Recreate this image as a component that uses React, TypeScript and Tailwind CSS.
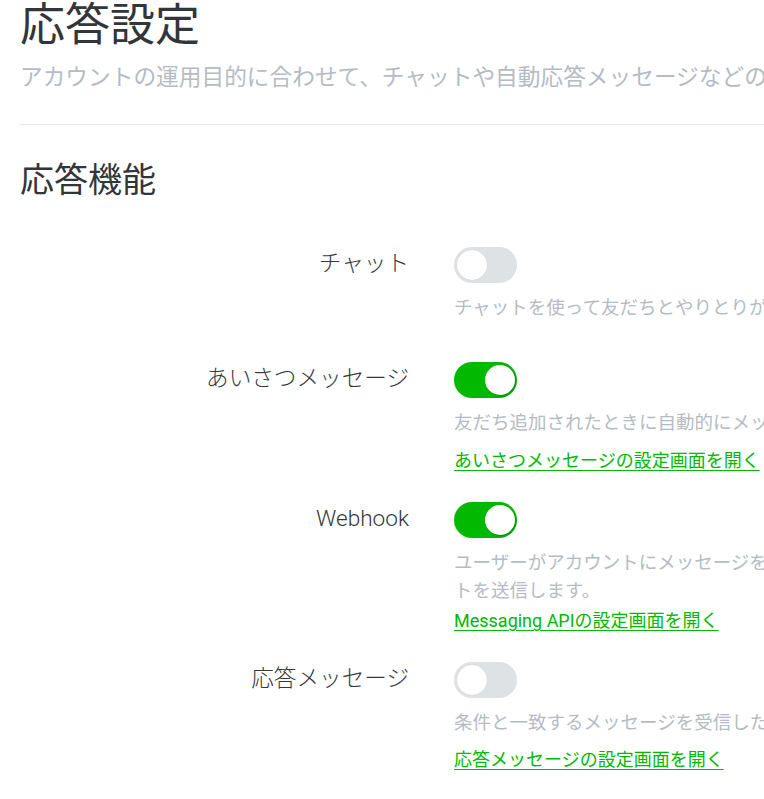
import React from "react";

type Row = {
  label: string;
  on: boolean;
  desc: string[];
  link?: string;
  linkMt?: number;
  mb: number;
};

const rows: Row[] = [
  {
    label: "チャット",
    on: false,
    desc: ["チャットを使って友だちとやりとりができます。"],
    mb: 40,
  },
  {
    label: "あいさつメッセージ",
    on: true,
    desc: ["友だち追加されたときに自動的にメッセージを送信します。"],
    link: "あいさつメッセージの設定画面を開く",
    linkMt: 10,
    mb: 27,
  },
  {
    label: "Webhook",
    on: true,
    desc: [
      "ユーザーがアカウントにメッセージを送信したときなどに、Webhook URLにイベン",
      "トを送信します。",
    ],
    link: "Messaging APIの設定画面を開く",
    linkMt: 2,
    mb: 27,
  },
  {
    label: "応答メッセージ",
    on: false,
    desc: ["条件と一致するメッセージを受信したときに、自動で応答メッセージを送信します。"],
    link: "応答メッセージの設定画面を開く",
    linkMt: 9,
    mb: 27,
  },
];

function Toggle({ on }: { on: boolean }) {
  return (
    <div
      className={
        "relative h-[36px] w-[63px] rounded-full " +
        (on ? "bg-[#00b900]" : "bg-[#dfe2e5]")
      }
    >
      <div
        className={
          "absolute top-[3px] h-[30px] w-[30px] rounded-full bg-white " +
          (on
            ? "right-[2px] shadow-[1px_1px_2px_rgba(0,80,0,0.45)]"
            : "left-[3px] shadow-[0_0_1px_rgba(0,0,0,0.15)]")
        }
      />
    </div>
  );
}

export default function App() {
  return (
    <div
      className="w-full min-h-[799px] overflow-hidden bg-white"
      style={{ fontFamily: 'Roboto, "Noto Sans CJK JP", sans-serif' }}
    >
      <div className="w-[1100px] pl-[20px]">
        <h1 className="text-[45px] leading-[52px] font-normal text-[#333639]">応答設定</h1>
        <p className="mt-[11px] whitespace-nowrap text-[22.7px] leading-[30px] text-[#b6bbc3]">
          アカウントの運用目的に合わせて、チャットや自動応答メッセージなどの機能を設定できます。
        </p>
        <div className="mt-[31px] h-px bg-[#e6e8ea]" />
        <h2 className="mt-[33px] text-[34px] leading-[44px] font-normal text-[#333639]">応答機能</h2>

        <div className="mt-[45px]">
          {rows.map((r) => (
            <div key={r.label} className="flex" style={{ marginBottom: r.mb }}>
              <div className="w-[389px] shrink-0 text-right text-[22.6px] leading-[34px] font-light text-[#34383c]">
                {r.label}
              </div>
              <div className="ml-[45px] flex flex-col items-start">
                <Toggle on={r.on} />
                <div className="mt-[11px] text-[18.5px] leading-[28px] text-[#b6bbc3]">
                  {r.desc.map((d) => (
                    <div key={d} className="whitespace-nowrap">
                      {d}
                    </div>
                  ))}
                </div>
                {r.link && (
                  <a
                    href="#"
                    className="whitespace-nowrap text-[18px] leading-[28px] text-[#00b900] underline underline-offset-[3px]"
                    style={{ marginTop: r.linkMt }}
                  >
                    {r.link}
                  </a>
                )}
              </div>
            </div>
          ))}
        </div>
      </div>
    </div>
  );
}
